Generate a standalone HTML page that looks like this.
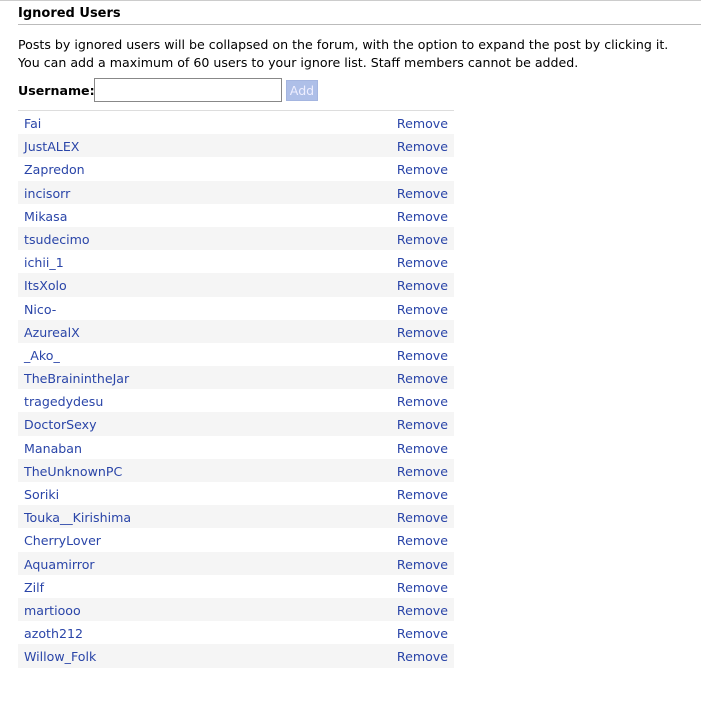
<!DOCTYPE html>
<html><head><style>
body{margin:0;background:#fff;font-family:"DejaVu Sans",Verdana,sans-serif;font-size:12.6px;color:#000;}
.top{height:1px;background:#ccc;}
h3{margin:0;position:absolute;left:18px;top:6px;font-size:13px;font-weight:bold;}
.hl{position:absolute;left:18px;right:0;top:24px;height:1px;background:#bbb;}
.p{position:absolute;left:18px;top:36px;line-height:17.5px;}
.f{position:absolute;left:18px;top:78px;}
.f b{position:absolute;left:0;top:5px;white-space:nowrap;}
.inp{position:absolute;left:76px;top:0;width:186px;height:22px;border:1px solid #888;}
.btn{position:absolute;left:268px;top:2px;width:30px;height:19px;background:#aebfe8;color:#eef;text-align:center;line-height:19px;border:1px solid #a4b5e0;}
.list{position:absolute;left:18px;top:110px;width:436px;border-top:1px solid #ddd;}
.r{height:23.2px;line-height:25px;padding:0 6px;color:#2a45a8;display:flex;justify-content:space-between;}
.r:nth-child(even){background:#f5f5f5;}
</style></head><body>
<div class="top"></div>
<h3>Ignored Users</h3>
<div class="hl"></div>
<div class="p">Posts by ignored users will be collapsed on the forum, with the option to expand the post by clicking it.<br>You can add a maximum of 60 users to your ignore list. Staff members cannot be added.</div>
<div class="f"><b>Username:</b><div class="inp"></div><div class="btn">Add</div></div>
<div class="list">
<div class="r"><span>Fai</span><span>Remove</span></div>
<div class="r"><span>JustALEX</span><span>Remove</span></div>
<div class="r"><span>Zapredon</span><span>Remove</span></div>
<div class="r"><span>incisorr</span><span>Remove</span></div>
<div class="r"><span>Mikasa</span><span>Remove</span></div>
<div class="r"><span>tsudecimo</span><span>Remove</span></div>
<div class="r"><span>ichii_1</span><span>Remove</span></div>
<div class="r"><span>ItsXolo</span><span>Remove</span></div>
<div class="r"><span>Nico-</span><span>Remove</span></div>
<div class="r"><span>AzurealX</span><span>Remove</span></div>
<div class="r"><span>_Ako_</span><span>Remove</span></div>
<div class="r"><span>TheBrainintheJar</span><span>Remove</span></div>
<div class="r"><span>tragedydesu</span><span>Remove</span></div>
<div class="r"><span>DoctorSexy</span><span>Remove</span></div>
<div class="r"><span>Manaban</span><span>Remove</span></div>
<div class="r"><span>TheUnknownPC</span><span>Remove</span></div>
<div class="r"><span>Soriki</span><span>Remove</span></div>
<div class="r"><span>Touka__Kirishima</span><span>Remove</span></div>
<div class="r"><span>CherryLover</span><span>Remove</span></div>
<div class="r"><span>Aquamirror</span><span>Remove</span></div>
<div class="r"><span>Zilf</span><span>Remove</span></div>
<div class="r"><span>martiooo</span><span>Remove</span></div>
<div class="r"><span>azoth212</span><span>Remove</span></div>
<div class="r"><span>Willow_Folk</span><span>Remove</span></div>
</div>
</body></html>
